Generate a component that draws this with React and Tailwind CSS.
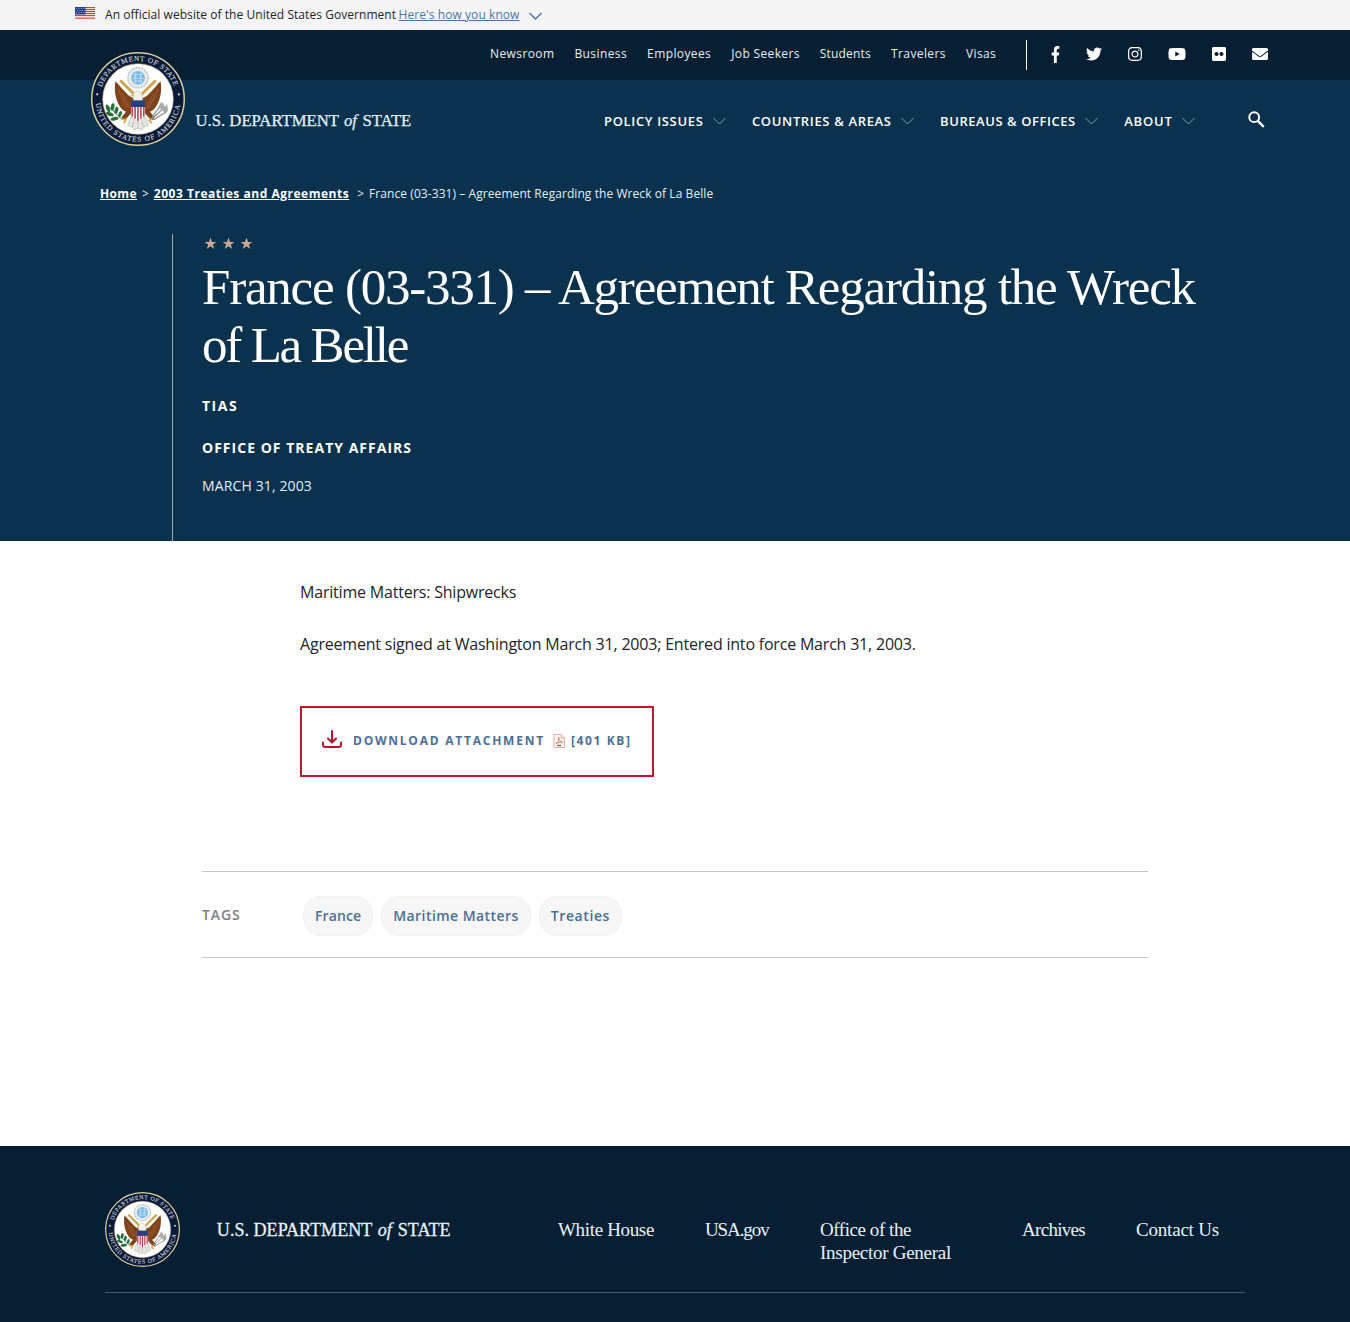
import React from "react";
import { FaFacebookF, FaTwitter, FaInstagram, FaYoutube, FaFlickr, FaEnvelope } from "react-icons/fa";

const topLinks = [
  { label: "Newsroom", spacing: "tracking-[0.4px]" },
  { label: "Business", spacing: "tracking-[0.4px]" },
  { label: "Employees", spacing: "tracking-[0.4px]" },
  { label: "Job Seekers", spacing: "tracking-[0.35px]" },
  { label: "Students", spacing: "tracking-[0.2px]" },
  { label: "Travelers", spacing: "tracking-[0.4px]" },
  { label: "Visas", spacing: "tracking-[0.4px]" },
];
const mainLinks = [
  { label: "POLICY ISSUES", spacing: "tracking-[0.66px]" },
  { label: "COUNTRIES & AREAS", spacing: "tracking-[0.65px]" },
  { label: "BUREAUS & OFFICES", spacing: "tracking-[0.55px]" },
  { label: "ABOUT", spacing: "tracking-[0.8px]" },
];
const tags = [
  { label: "France", spacing: "tracking-[0.1px]" },
  { label: "Maritime Matters", spacing: "tracking-[0.45px]" },
  { label: "Treaties", spacing: "tracking-[0.58px]" },
];

function Seal({ id, className }) {
  return (
    <svg viewBox="0 0 100 100" className={className}>
      <circle cx="50" cy="50" r="49.2" fill="#0b1a38" stroke="#d8cf9c" strokeWidth="1.6" />
      <defs>
        <path id={id + "-top"} d="M 11.5 37.5 A 40.5 40.5 0 0 1 88.5 37.5" />
        <path id={id + "-bottom"} d="M 5 54.5 A 45.2 45.2 0 0 0 95 54.5" />
      </defs>
      <g fill="#c9cfd8" stroke="#c9cfd8" strokeWidth="0.15" fontFamily="Liberation Serif, serif" fontSize="7.8">
        <text>
          <textPath href={"#" + id + "-top"} textLength="100">DEPARTMENT OF STATE</textPath>
        </text>
        <text>
          <textPath href={"#" + id + "-bottom"} textLength="131">UNITED STATES OF AMERICA</textPath>
        </text>
      </g>
      <circle cx="6.6" cy="45" r="1.2" fill="#e6e2c8" />
      <circle cx="93.4" cy="45" r="1.2" fill="#e6e2c8" />
      <circle cx="50" cy="50" r="37.6" fill="#fff" stroke="#b9b184" strokeWidth="0.6" />
      <circle cx="50" cy="27.5" r="10.8" fill="#e9edf0" stroke="#b3b7bc" strokeWidth="1.4" strokeDasharray="2 1" />
      <circle cx="50" cy="27.5" r="7.4" fill="#7dbbe6" />
      <path d="M45 24h10M44 28h12M46 31h8M47 22v11M53 22v11" stroke="#d3e9f8" strokeWidth="0.8" />
      <path d="M26 31C24 43 27 54 33 61c4 4 9 4 13 3l3-14c-5-1-9-3-12-7-4-4-7-8-11-12z" fill="#7e431b" />
      <path d="M74 31c2 12-1 23-7 30-4 4-9 4-13 3l-3-14c5-1 9-3 12-7 4-4 7-8 11-12z" fill="#7e431b" />
      <path d="M32 31l14 14M68 31l-14 14" stroke="#cda54c" strokeWidth="3" strokeLinecap="round" />
      <path d="M29 40l9 19M34 45l7 15M71 40l-9 19M66 45l-7 15" stroke="#b97f48" strokeWidth="0.5" />
      <path d="M43 61l-8 9M57 61l8 9" stroke="#7e431b" strokeWidth="5" strokeLinecap="round" />
      <path d="M45 45c1-4 7-5 9-1l1 8H45z" fill="#f3f0e6" stroke="#b7b0a0" strokeWidth="0.5" />
      <path d="M45 45l-3 1.500 3 1" fill="#d6a441" />
      <path d="M42 70l-3 8 5 2 2 3 4-2 4 2 2-3 5-2-3-8z" fill="#e8e6e3" stroke="#b4b2b0" strokeWidth="0.7" />
      <path d="M46 72l-2 8M50 72v9M54 72l2 8" stroke="#a9a8aa" strokeWidth="0.6" />
      <path d="M42.500 52h15v13c0 4-4 7-7.500 9-3.500-2-7.500-5-7.500-9z" fill="#fff" />
      <path d="M43.800 58v11M46.900 58v13M50 58v15.500M53.100 58v13M56.200 58v11" stroke="#b82a42" strokeWidth="1.500" />
      <path d="M42.500 51.500h15v7h-15z" fill="#24407f" />
      <path d="M18 58c5 3 9 8 14 13" stroke="#2c6b36" strokeWidth="1" fill="none" />
      <g fill="#27703a">
        <ellipse cx="18" cy="60" rx="1.900" ry="4.300" transform="rotate(-20 18 60)" />
        <ellipse cx="23" cy="58.500" rx="1.900" ry="4" transform="rotate(10 23 58.500)" />
        <ellipse cx="20" cy="66" rx="1.900" ry="4.200" transform="rotate(-70 20 66)" />
        <ellipse cx="27" cy="62" rx="1.900" ry="3.800" transform="rotate(15 27 62)" />
        <ellipse cx="25" cy="71" rx="1.900" ry="4.200" transform="rotate(-100 25 71)" />
        <ellipse cx="31" cy="66" rx="1.700" ry="3.400" transform="rotate(20 31 66)" />
      </g>
      <path d="M32 71l5 1-2 4M66 70l-4 3 3 3" stroke="#d2a94e" strokeWidth="1.800" fill="none" />
      <path d="M65 71l14-13M65 69l10-13M67 72l14-9" stroke="#8b8f8c" strokeWidth="1.200" />
      <path d="M71 59l4-6 3 3-1 6zM76 62l5-7 1 7-3 4z" fill="#a9adaa" />
    </svg>
  );
}

function Wordmark({ className }) {
  return (
    <svg viewBox="0 0 220 24" className={className} fill="#e4f2fb" fontFamily="Liberation Serif, serif" stroke="#e4f2fb" strokeWidth="0.25">
      <text x="0.500" y="17" fontSize="16.800" textLength="143.500" lengthAdjust="spacingAndGlyphs">U.S. DEPARTMENT</text>
      <text x="149" y="17" fontSize="17" fontStyle="italic" textLength="13" lengthAdjust="spacingAndGlyphs">of</text>
      <text x="167.500" y="17" fontSize="16.800" textLength="48.800" lengthAdjust="spacingAndGlyphs">STATE</text>
    </svg>
  );
}

function Chevron({ className }) {
  return (
    <svg viewBox="0 0 13 8" className={className} fill="none" stroke="currentColor">
      <path d="M0.500 1l6 6 6-6" />
    </svg>
  );
}

function SearchIcon({ className }) {
  return (
    <svg viewBox="0 0 17 17" className={className} fill="none" stroke="currentColor">
      <circle cx="6.200" cy="6.200" r="4.900" strokeWidth="2" />
      <path d="M9.800 9.800l6 6" strokeWidth="2.400" />
    </svg>
  );
}

function Flag() {
  return (
    <svg viewBox="0 0 20 12" className="h-3 w-5">
      <path fill="#f6d9d6" d="M0 0h20v12H0z" />
      <path stroke="#db3e1f" strokeWidth="1" d="M0 .5h20M0 2.500h20M0 4.500h20M0 6.500h20M0 8.500h20M0 11.200h20" />
      <path fill="#2a3f9d" d="M0 0h10.500v7.500H0z" />
      <path stroke="#b9c4ee" strokeWidth=".7" strokeDasharray="1 1.500" d="M1 1.500h9M2 3.500h8M1 5.500h9" />
    </svg>
  );
}

function Star() {
  return (
    <svg viewBox="0 0 24 24" className="size-[13px]" fill="#c9a992">
      <path d="M12 1l2.800 8H23l-6.600 5 2.500 8.300L12 17.300 5.100 22.300 7.600 14 1 9h8.200z" />
    </svg>
  );
}

function PdfIcon() {
  return (
    <svg viewBox="0 0 12 14" className="h-[14px] w-3" fill="none">
      <path d="M1 .5h7l3.500 3.500v9.500H1z" fill="#fdf6f3" stroke="#e0b0a2" />
      <path d="M8 .5V4h3.500" stroke="#e0b0a2" />
      <path d="M3 9.500c2-1 3-3.500 2.800-6C6 6 7.500 8 9.500 8.300 7 8 5 8.500 3 9.500z" stroke="#dc6350" strokeWidth=".8" />
      <path d="M4 11.500h4" stroke="#7d655d" strokeWidth="1.400" />
    </svg>
  );
}

function DownloadIcon() {
  return (
    <svg viewBox="0 0 20 18" className="h-[18px] w-5" fill="none" stroke="#b3152b" strokeWidth="2" strokeLinecap="round" strokeLinejoin="round">
      <path d="M10 1v11M6 8.500l4 4 4-4M1 12.500v2c0 1.500.8 2.500 2.500 2.500h13c1.700 0 2.500-1 2.500-2.500v-2" />
    </svg>
  );
}

export default function App() {
  return (
    <div className="h-[1322px] w-[1350px] overflow-hidden bg-white font-['Open_Sans',sans-serif] text-[#212529]">
      <div className="flex h-[30px] items-center bg-[#f5f5f5] pl-[75px] text-[12px]">
        <div className="mr-[10px] -mt-1"><Flag /></div>
        <span className="tracking-[0.05px]">An official website of the United States Government</span>
        <a className="ml-[2.5px] tracking-[0.07px] text-[#4a77a8] underline">Here's how you know</a>
        <Chevron className="mt-px ml-[9px] h-2 w-[13px] stroke-[1.5] text-[#4a77a8]" />
      </div>

      <header className="bg-[#0a314d] text-white">
        <div className="flex h-[50px] items-center bg-[#081f33] pl-[490px]">
          <nav className="flex w-[507px] shrink-0 gap-5 text-[12px] leading-[18px]">
            {topLinks.map((l) => (
              <a key={l.label} className={"-mt-[3px] whitespace-nowrap text-[#e4eef5] " + l.spacing}>{l.label}</a>
            ))}
          </nav>
          <div className="ml-[29px] h-[30px] w-px bg-white" />
          <div className="-mt-[2px] ml-[24px] flex items-center gap-[26px]">
            <FaFacebookF className="h-[17px] w-[9px]" preserveAspectRatio="none" />
            <FaTwitter className="size-4" />
            <FaInstagram className="h-4 w-[14px]" />
            <FaYoutube className="h-4 w-[18px]" />
            <FaFlickr className="h-4 w-[14px]" />
            <FaEnvelope className="size-4" />
          </div>
        </div>

        <div className="flex h-[82px] items-start pl-[91px]">
          <Seal id="head" className="relative -mt-[28px] size-[94px] shrink-0" />
          <Wordmark className="mt-[29px] ml-[10px] h-6 w-[220px] shrink-0 overflow-visible" />
          <nav className="mt-8 ml-[189px] flex w-[591px] shrink-0 gap-[26px] text-[13px] leading-[18px] font-semibold">
            {mainLinks.map((l) => (
              <a key={l.label} className="flex items-center whitespace-nowrap">
                <span className={l.spacing}>{l.label}</span>
                <Chevron className="ml-[9.5px] h-2 w-[13px] text-[#7c9bb0]" />
              </a>
            ))}
          </nav>
          <SearchIcon className="mt-[31px] ml-[53px] size-[17px]" />
        </div>

        <div className="flex h-[72px] items-start pt-[23px] pl-[100px] text-[12px] leading-[18px] text-[#e4eef5]">
          <a className="font-bold tracking-[0.37px] text-white underline">Home</a>
          <span className="mx-[5px]">&gt;</span>
          <a className="font-bold tracking-[0.52px] text-white underline">2003 Treaties and Agreements</a>
          <span className="mr-[5px] ml-2">&gt;</span>
          <span className="tracking-[0.07px]">France (03-331) – Agreement Regarding the Wreck of La Belle</span>
        </div>

        <div className="ml-[172px] h-[307px] border-l border-[#a3a6a2] pl-[29px]">
          <div className="flex gap-[5px] pt-[3px] pl-[2px]"><Star /><Star /><Star /></div>
          <h1 className="mt-[8px] font-['Liberation_Serif',serif] text-[51px] leading-[58px] whitespace-nowrap">
            <span className="tracking-[-1.23px]">France (03-331) – Agreement Regarding the Wreck</span>
            <br />
            <span className="tracking-[-2.2px]">of La Belle</span>
          </h1>
          <p className="mt-[22px] text-[14px] leading-5 font-bold tracking-[1.5px]">TIAS</p>
          <p className="mt-[22px] text-[14px] leading-5 font-bold tracking-[1.02px]">OFFICE OF TREATY AFFAIRS</p>
          <p className="mt-[18px] text-[14px] leading-5 tracking-[0.13px] text-[#e4eef5]">MARCH 31, 2003</p>
        </div>
      </header>

      <main className="h-[605px]">
        <div className="pt-[38px] pl-[300px] text-[16px] leading-[26px] tracking-[-0.2px]">
          <p>Maritime Matters: Shipwrecks</p>
          <p className="mt-[26px]">Agreement signed at Washington March 31, 2003; Entered into force March 31, 2003.</p>
          <a className="mt-[49px] flex h-[71px] w-[354px] items-start border-2 border-[#c4142c] pt-[22px] pl-5 text-[12px] leading-[22px] font-bold text-[#4a6f98]">
            <DownloadIcon />
            <span className="ml-[11px] w-[192px] tracking-[1.76px] whitespace-nowrap">DOWNLOAD ATTACHMENT</span>
            <span className="mt-1 ml-2"><PdfIcon /></span>
            <span className="ml-[6px] tracking-[1.6px] whitespace-nowrap">[401 KB]</span>
          </a>
        </div>
        <div className="mt-[94px] ml-[202px] flex h-[87px] w-[946px] items-start border-y border-[#c3c7c9] pt-[24px]">
          <span className="mt-[9px] w-[101px] text-[14px] leading-5 font-semibold tracking-[0.9px] text-[#7b7f83]">TAGS</span>
          <div className="flex gap-2">
            {tags.map((t) => (
              <a key={t.label} className={"rounded-[18px] border border-[#f1f1f1] bg-[#f6f6f7] px-[11px] py-[9px] text-[14px] leading-5 font-semibold text-[#4a6f98] " + t.spacing}>
                {t.label}
              </a>
            ))}
          </div>
        </div>
      </main>

      <footer className="h-[176px] bg-[#081f33] px-[105px] text-[#e4f2fb]">
        <div className="flex h-[147px] items-start border-b border-[#405c71]">
          <Seal id="foot" className="mt-[46px] mr-px size-[75px] shrink-0" />
          <Wordmark className="mt-[72px] ml-[35px] h-[26px] w-[239px] shrink-0 overflow-visible" />
          <div className="mt-[72px] ml-[103px] flex font-['Liberation_Serif',serif] text-[19px] leading-[23px] whitespace-nowrap">
            <span className="w-[147px] tracking-[-0.34px]">White House</span>
            <span className="w-[115px] tracking-[-1.1px]">USA.gov</span>
            <span className="w-[202px]">
              <span className="block tracking-[-0.44px]">Office of the</span>
              <span className="block tracking-[-0.27px]">Inspector General</span>
            </span>
            <span className="w-[114px] tracking-[-0.7px]">Archives</span>
            <span className="tracking-[-0.2px]">Contact Us</span>
          </div>
        </div>
      </footer>
    </div>
  );
}
